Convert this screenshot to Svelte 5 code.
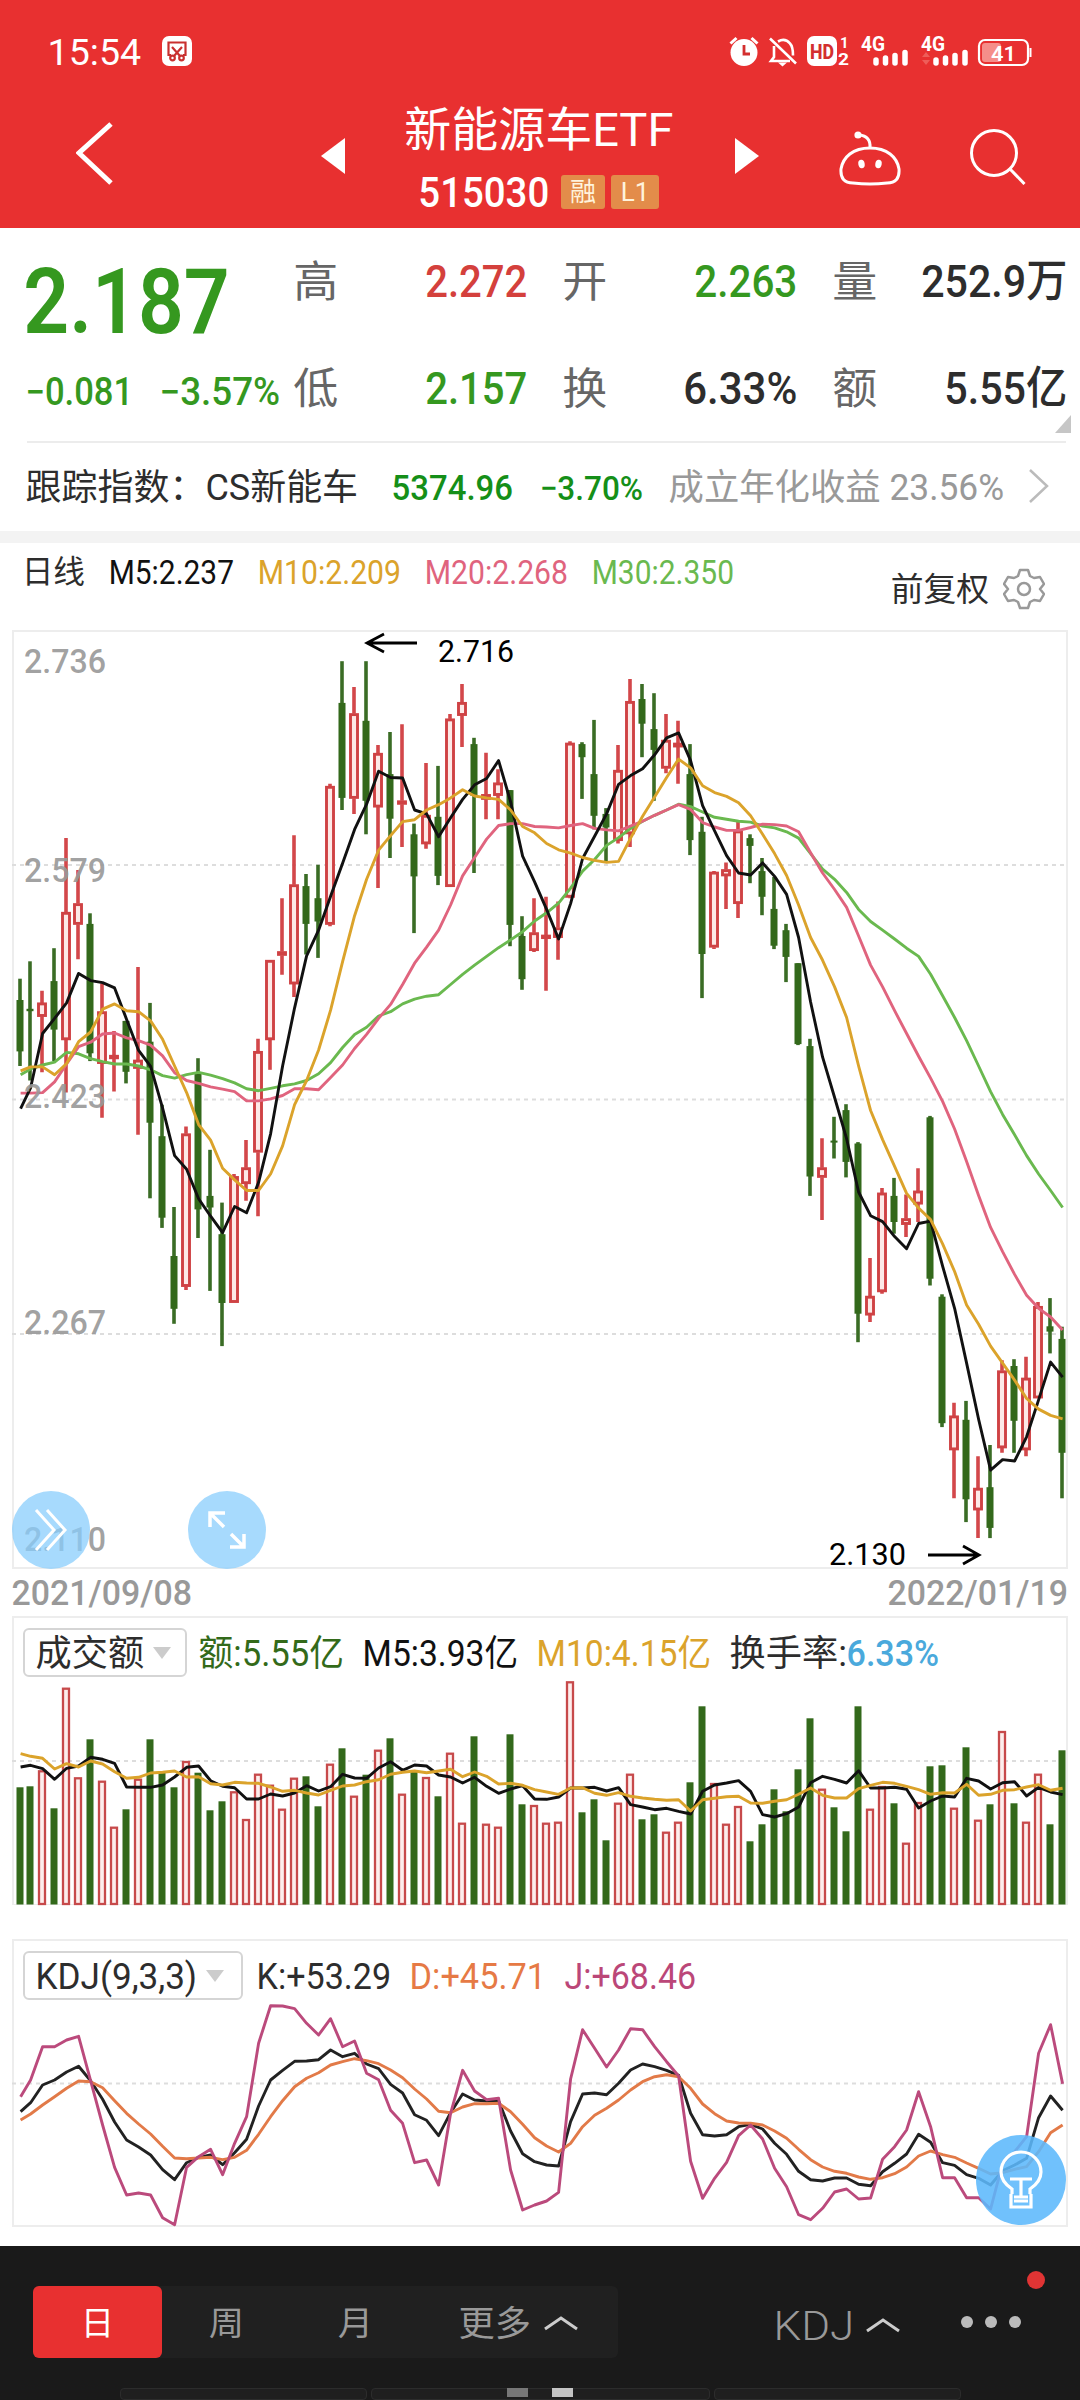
<script>
  // Columns are 12px apart, the first one sits slightly closer to the second.
  const columnX = (i) => (i === 0 ? 8 : i === 1 ? 18 : 30 + 12 * (i - 2));
  const priceY = (v) => (v / 2.063 - 10).toFixed(1);
  const volumeY = (v) => ((v - 20) / 3).toFixed(1);
  const kdjY = (v) => ((v - 30) / 3).toFixed(1);

  const points = (values, scale) =>
    values.map((v, i) => `${columnX(i) + 0.6},${scale(v)}`).join(' ');

  // One candle per entry: direction, high, body top, body bottom, low.
  const candles = `g740,784,890,920 g704,802,807,950 r765,790,818,933 g677,745,845,910 r450,603,866,975
    r516,585,628,700 g605,627,894,910 r750,808,915,1027 r848,898,904,973 g827,827,932,956
    r716,908,925,1062 g790,870,1037,1193 g1000,1065,1233,1254 g1211,1312,1421,1452 r1045,1060,1375,1382
    g904,935,1216,1275 g1093,1188,1212,1384 g1202,1267,1409,1498 r1143,1148,1408,1408 r1073,1130,1163,1198
    r864,890,1098,1230 r702,702,866,928 r574,684,692,732 r444,546,751,778 g524,549,627,690
    g505,574,622,697 r338,343,628,632 g85,171,367,392 r138,193,368,400 g85,208,373,442
    r258,275,386,553 g231,318,410,491 r215,373,380,468 g420,442,529,646 r295,403,462,472
    g301,406,528,547 r194,204,550,550 r132,170,197,262 g243,256,363,522 r274,360,370,411
    r308,336,362,411 g351,351,629,673 g611,652,741,763 r574,645,682,685 r571,650,657,765
    r581,635,655,701 r250,254,572,574 g252,256,283,369 g206,318,404,432 g388,400,428,500
    r258,310,455,461 r122,168,441,468 g132,163,214,283 g151,225,268,373 r194,248,306,316
    r208,254,262,338 g256,318,454,485 g406,437,689,780 r518,520,675,679 r500,515,528,596
    r416,435,585,615 g442,450,466,543 g491,518,571,609 g530,596,672,679 g627,640,695,747
    g708,708,875,877 g864,879,1148,1188 r1069,1130,1150,1238 g1025,1074,1077,1111 g999,1011,1118,1150
    g1077,1080,1431,1490 r1316,1395,1434,1448 r1172,1182,1386,1390 g1151,1188,1242,1266 r1185,1235,1247,1273
    r1131,1178,1205,1242 g1023,1026,1359,1373 g1391,1396,1657,1665 r1615,1642,1712,1812 g1611,1650,1814,1861
    r1725,1791,1836,1894 g1702,1789,1873,1894 r1527,1549,1708,1718 g1525,1539,1652,1718 r1520,1564,1712,1725
    r1407,1416,1605,1605 g1399,1457,1468,1513 g1458,1483,1718,1812`
    .trim()
    .split(/\s+/)
    .map((entry, i) => {
      const [high, top, bottom, low] = entry.slice(1).split(',').map((v) => +priceY(v));
      return { x: columnX(i), up: entry[0] === 'r', high, top, bottom, low };
    });

  const averages = [
    { name: 'm30', values: [938,926,918,912,892,895,905,911,916,916,920,928,940,945,938,933,939,946,955,967,971,966,961,957,950,936,913,882,855,840,817,808,792,782,776,773,752,731,712,694,676,660,643,621,604,584,553,518,494,465,449,430,415,403,392,380,385,396,407,411,415,417,425,429,437,450,482,514,535,562,597,622,640,658,677,694,731,775,820,868,920,973,1020,1062,1105,1143,1177,1212] },
    { name: 'm20', values: [976,976,975,953,916,880,871,854,852,862,868,877,899,934,950,956,963,968,973,992,992,988,981,967,967,969,944,918,884,855,822,793,752,708,675,640,588,528,490,452,424,420,420,426,427,429,424,420,430,433,435,425,415,403,392,381,391,418,427,434,434,428,421,422,425,437,480,522,556,593,652,712,757,806,853,900,945,993,1050,1117,1187,1253,1303,1350,1393,1420,1438,1465] },
    { name: 'm5', values: [1008,965,853,822,790,729,744,748,759,824,888,921,1007,1105,1133,1194,1230,1264,1210,1223,1160,1060,920,800,693,640,570,502,432,380,312,325,326,392,400,447,408,370,340,327,290,375,487,540,597,658,585,492,446,400,339,321,307,278,243,233,290,383,435,486,522,526,501,529,566,655,788,902,985,1070,1180,1229,1241,1272,1297,1245,1240,1333,1420,1533,1649,1754,1732,1735,1685,1609,1531,1562] },
    { name: 'm10', values: [930,922,922,938,915,870,850,803,792,806,808,827,865,920,975,1041,1073,1131,1155,1177,1177,1143,1085,1000,950,887,805,705,610,535,475,445,416,412,392,381,367,350,363,367,370,392,426,439,461,474,481,490,496,500,498,450,405,365,325,287,305,342,356,364,377,404,442,482,527,588,655,702,757,820,920,1012,1072,1127,1183,1213,1237,1287,1344,1413,1453,1498,1533,1568,1606,1628,1641,1648] }
  ];

  const volumes = [531,528,480,594,232,501,387,511,649,597,505,387,485,531,452,487,600,573,543,626,490,523,595,502,498,588,460,414,556,493,418,384,550,480,500,558,427,637,378,640,649,372,582,584,637,634,213,606,567,690,577,490,627,612,664,634,516,288,518,640,587,693,642,537,603,477,324,535,591,663,288,595,527,579,697,575,468,465,592,411,628,582,362,579,634,490,642,420];
  const volumeM5 = [470,465,475,507,474,467,441,447,459,530,531,531,524,500,471,467,511,528,532,566,566,551,557,548,526,542,529,492,503,504,473,454,480,464,467,494,500,518,501,528,549,536,526,566,567,560,533,533,531,542,532,583,590,598,594,603,611,543,524,518,511,543,613,620,610,590,517,498,507,518,481,533,533,531,537,593,572,557,560,504,512,536,517,514,557,531,545,553];
  const volumeM10 = [430,438,444,476,460,470,452,461,484,504,501,488,486,482,500,499,520,524,516,518,519,530,543,540,548,554,540,527,524,514,508,492,486,482,487,482,477,499,485,498,521,519,525,538,545,552,533,532,549,555,547,558,563,567,570,568,602,568,564,559,558,578,579,573,568,552,533,555,563,563,535,525,516,519,528,538,552,547,548,522,555,552,540,538,530,523,540,534];

  const kLine = [545,518,465,450,426,409,452,508,576,630,651,675,719,749,698,682,675,704,668,628,528,450,421,394,393,389,360,380,370,402,416,463,489,554,571,617,548,492,510,513,512,603,671,695,705,708,575,492,489,494,460,420,402,410,421,436,550,614,618,614,590,583,597,640,673,724,749,753,744,744,763,767,725,700,672,613,637,698,706,734,745,765,722,705,685,563,498,541];
  const dLine = [570,552,525,500,475,453,455,473,512,550,582,612,649,684,686,684,682,689,682,661,613,560,512,470,445,428,405,395,386,392,401,420,443,477,507,544,548,531,521,521,520,545,583,623,648,666,640,590,556,535,510,480,455,440,434,440,475,522,551,573,579,580,585,603,625,658,689,711,724,730,741,748,743,731,711,678,663,674,682,699,715,732,728,718,710,665,608,585];
  const jLine = [500,450,350,350,330,319,452,585,712,795,789,795,863,884,712,680,658,734,640,560,340,227,228,236,280,315,266,350,333,430,449,541,580,698,690,765,550,421,483,509,505,720,840,825,813,787,447,299,355,411,360,296,299,350,395,438,694,805,745,697,617,585,627,715,770,854,869,835,786,777,807,804,688,650,600,485,590,743,743,803,803,837,700,665,620,370,284,461];

  const quotes = [
    [['高', '2.272', 99, 'up'], ['低', '2.157', 99, 'down']],
    [['开', '2.263', 100, 'down'], ['换', '6.33%', 111, 'ink']],
    [['量', '252.9万', 143, 'ink'], ['额', '5.55亿', 120, 'ink']]
  ];
  const gridlines = [235, 469.5, 704];
  const priceLabels = [['2.736', 43], ['2.579', 252], ['2.423', 478], ['2.267', 704], ['2.110', 921]];
</script>

<!-- Text condensed to a given width; the box ends at the baseline. -->
{#snippet fit(text, width, size, cls)}
  <svg class="fit {cls}" {width} height={Math.round(size * 0.72)}>
    <text x={-size * 0.04} y={Math.round(size * 0.72)} font-size={size} textLength={width + size * 0.07} lengthAdjust="spacingAndGlyphs">{text}</text>
  </svg>
{/snippet}

<div class="app">
  <header>
    <div class="status">
      {@render fit('15:54', 91, 37, 'white')}
      <svg class="shot" width="30" height="30" viewBox="0 0 30 30">
        <rect width="30" height="30" rx="7" fill="#fff" />
        <g fill="none" stroke="#c9302f" stroke-width="2.2">
          <path d="M9 19H6.5V6.5h17V19H21M10 11l8 9M20 11l-8 9" />
          <circle cx="10.500" cy="22" r="2.300" /><circle cx="19.500" cy="22" r="2.300" />
        </g>
      </svg>
      <svg class="indicators" width="304" height="34" viewBox="728 34 304 34">
        <circle cx="744" cy="52.500" r="13.500" fill="#fff" />
        <path d="M730.500 43.500l6-5.500M757.500 43.500l-6-5.500" fill="none" stroke="#fff" stroke-width="3" />
        <path d="M744 45v9h6" fill="none" stroke="#d32f2f" stroke-width="2.800" />
        <g fill="none" stroke="#fff" stroke-width="2.600">
          <path d="M770 38.500l26 25M774 46v11l-3 4h19M778 41.500q7-4 12 2 3 3 3 12" />
        </g>
        <path d="M778 62.500h9l-4.500 4z" fill="#fff" />
        <rect x="807" y="36" width="30" height="30" rx="7" fill="#fff" />
        <text x="810" y="58.500" font-size="20" font-weight="800" fill="#d32f2f" textLength="24" lengthAdjust="spacingAndGlyphs">HD</text>
        <g fill="#fff" font-weight="700">
          <text x="840" y="48" font-size="15">1</text>
          <text x="838" y="65" font-size="16" textLength="11" lengthAdjust="spacingAndGlyphs">2</text>
          <text x="861" y="51" font-size="20" textLength="24" lengthAdjust="spacingAndGlyphs">4G</text>
          <text x="921" y="51" font-size="20" textLength="24" lengthAdjust="spacingAndGlyphs">4G</text>
        </g>
        <g stroke="#fff" stroke-width="5.500" stroke-linecap="round">
          <path d="M876 60v3M885.500 58v5M895 55.500v7.500M905 52.500v10.500M936 60v3M945.500 58v5M955 55.500v7.500M965 52.500v10.500" />
        </g>
        <path d="M922 57l4-5 4 5zM922 60l4 5 4-5z" fill="#ee5d59" />
        <rect x="982" y="43" width="19" height="19" rx="3" fill="#f58e8a" />
        <rect x="979" y="40" width="49" height="25" rx="6" fill="none" stroke="#fff" stroke-width="2.200" />
        <path d="M1030.500 48v9" stroke="#fff" stroke-width="2" />
        <text x="991" y="60.500" font-size="21" font-weight="600" fill="#fff" textLength="25" lengthAdjust="spacingAndGlyphs">41</text>
      </svg>
    </div>
    <div class="titlebar">
      <svg class="back" width="40" height="68" viewBox="0 0 40 68"><path d="M35 4L3 33l32 30" fill="none" stroke="#fff" stroke-width="5" /></svg>
      <svg class="prev" width="25" height="36" viewBox="0 0 25 36"><path d="M24 0v36L0 18z" fill="#fff" /></svg>
      <div class="title">
        <h1>{@render fit('新能源车ETF', 266, 47, 'white')}</h1>
        <div class="code">
          {@render fit('515030', 128, 42, 'white semi')}
          <span class="tag">融</span>
          <span class="tag l1">L1</span>
        </div>
      </div>
      <svg class="next" width="25" height="36" viewBox="0 0 25 36"><path d="M0 0v36l24-18z" fill="#fff" /></svg>
      <svg class="robot" width="62" height="58" viewBox="0 0 62 58" fill="none" stroke="#fff" stroke-width="3">
        <path d="M31 19C48 19 58 28 60 40Q61 54 48 54Q31 56 14 54Q1 54 2 40C4 28 14 19 31 19z" />
        <path d="M31 19Q32 7 20 6" />
        <circle cx="19" cy="6" r="3.600" fill="#fff" stroke="none" />
        <ellipse cx="22.500" cy="35" rx="3.200" ry="4.200" fill="#fff" stroke="none" transform="rotate(-10 22.500 35)" />
        <ellipse cx="39.500" cy="35" rx="3.200" ry="4.200" fill="#fff" stroke="none" transform="rotate(10 39.500 35)" />
      </svg>
      <svg class="search" width="56" height="58" viewBox="0 0 56 58" fill="none" stroke="#fff" stroke-width="3">
        <circle cx="24" cy="25" r="22.500" /><path d="M40 41l14.500 15" />
      </svg>
    </div>
  </header>

  <section class="quote">
    <div class="last">
      <div class="line big">{@render fit('2.187', 200, 91, 'down bold')}</div>
      <div class="line change">
        {@render fit('−0.081', 105, 38, 'down semi')}
        {@render fit('−3.57%', 118, 38, 'down semi')}
      </div>
    </div>
    {#each quotes as column}
      <div class="column">
        {#each column as [label, value, width, tone]}
          <div class="line cell">
            {@render fit(label, 42, 43, 'label')}
            {@render fit(value, width, 45, `${tone} semi`)}
          </div>
        {/each}
      </div>
    {/each}
    <i class="corner"></i>
  </section>

  <section class="index">
    {@render fit('跟踪指数：CS新能车', 330, 36, 'ink')}
    {@render fit('5374.96', 119, 35, 'index-green semi')}
    {@render fit('−3.70%', 101, 34, 'index-green semi')}
    {@render fit('成立年化收益 23.56%', 333, 36, 'muted')}
    <svg class="more" width="22" height="36" viewBox="0 0 22 36"><path d="M2 2l17 16L2 34" fill="none" stroke="#bbb" stroke-width="2.500" /></svg>
  </section>

  <section class="legend">
    {@render fit('日线', 61, 32, 'ink')}
    {@render fit('M5:2.237', 123, 33, 'm5')}
    {@render fit('M10:2.209', 141, 33, 'm10')}
    {@render fit('M20:2.268', 141, 33, 'm20')}
    {@render fit('M30:2.350', 140, 33, 'm30')}
    <div class="adjust">
      {@render fit('前复权', 96, 33, 'ink')}
      <svg width="42" height="42" viewBox="0 0 42 42" fill="none" stroke="#999" stroke-width="2.500" stroke-linejoin="round">
        <path d="M17 2h8l2 6 4 2 6-1 4 7-4 5 4 5-4 7-6-1-4 2-2 6h-8l-2-6-4-2-6 1-4-7 4-5-4-5 4-7 6 1 4-2z" />
        <circle cx="21" cy="21" r="6" />
      </svg>
    </div>
  </section>

  <section class="panel price">
    <svg width="1056" height="938">
      {#each gridlines as y}
        <line class="dash" x1="0" x2="1054" y1={y} y2={y} />
      {/each}
      {#each candles as c}
        {#if c.up}
          <path class="wick up" d="M{c.x} {c.high}V{c.top}M{c.x} {c.bottom}V{c.low}" />
          <rect class="hollow" x={c.x - 3.5} y={c.top + 1} width="7" height={Math.max(c.bottom - c.top - 2, 1.5)} />
        {:else}
          <path class="wick down" d="M{c.x} {c.high}V{c.low}" />
          <rect class="solid" x={c.x - 3.5} y={c.top} width="7" height={Math.max(c.bottom - c.top, 2)} />
        {/if}
      {/each}
      {#each averages as line}
        <polyline class="curve {line.name}" points={points(line.values, priceY)} />
      {/each}
      {#each priceLabels as [label, y]}
        <text class="axis" x="12" {y} textLength="82" lengthAdjust="spacingAndGlyphs">{label}</text>
      {/each}
      <g fill="none" stroke="#000" stroke-width="2.800">
        <path d="M405 13H356M372 4l-17 9 17 9M916 925h49M951 916l16 9-16 9" />
      </g>
      <text class="mark" x="426" y="32" textLength="76" lengthAdjust="spacingAndGlyphs">2.716</text>
      <text class="mark" x="817" y="935" textLength="77" lengthAdjust="spacingAndGlyphs">2.130</text>
    </svg>
    <div class="round skip">
      <svg width="36" height="44" viewBox="0 0 36 44" fill="none" stroke="#fff" stroke-width="3"><path d="M3 2l18 20L3 42M14 2l18 20-18 20" /></svg>
    </div>
    <div class="round expand">
      <svg width="40" height="40" viewBox="0 0 40 40" fill="none" stroke="#fff" stroke-width="3.500"><path d="M18 3H3v14M3 3l14 14M37 24v13H23M37 37L24 24" /></svg>
    </div>
  </section>

  <div class="dates">
    {@render fit('2021/09/08', 178, 35, 'muted semi')}
    {@render fit('2022/01/19', 178, 35, 'muted semi')}
  </div>

  <section class="panel volume">
    <div class="head">
      <div class="select vol">{@render fit('成交额', 106, 36, 'ink')}<i></i></div>
      {@render fit('额:5.55亿', 143, 36, 'green')}
      {@render fit('M5:3.93亿', 153, 36, 'm5')}
      {@render fit('M10:4.15亿', 172, 36, 'm10')}
      {@render fit('换手率:', 115, 36, 'ink')}
      {@render fit('6.33%', 90, 36, 'blue semi')}
    </div>
    <svg class="plot" width="1056" height="289">
      <line class="dash" x1="0" x2="1054" y1="144" y2="144" />
      {#each volumes as v, i}
        {#if candles[i].up}
          <rect class="vbar" x={columnX(i) - 3} y={+volumeY(v) + 1} width="6" height={286 - volumeY(v)} />
        {:else}
          <rect class="solid" x={columnX(i) - 3.5} y={volumeY(v)} width="7" height={287.5 - volumeY(v)} />
        {/if}
      {/each}
      <polyline class="curve m5" points={points(volumeM5, volumeY)} />
      <polyline class="curve m10" points={points(volumeM10, volumeY)} />
    </svg>
  </section>

  <section class="panel kdj">
    <div class="head">
      <div class="select osc">{@render fit('KDJ(9,3,3)', 159, 36, 'ink')}<i></i></div>
      {@render fit('K:+53.29', 132, 36, 'ink')}
      {@render fit('D:+45.71', 134, 36, 'orange')}
      {@render fit('J:+68.46', 129, 36, 'pink')}
    </div>
    <svg class="plot" width="1056" height="287">
      <line class="dash" x1="0" x2="1054" y1="143.500" y2="143.500" />
      <polyline class="curve k" points={points(kLine, kdjY)} />
      <polyline class="curve d" points={points(dLine, kdjY)} />
      <polyline class="curve j" points={points(jLine, kdjY)} />
    </svg>
    <div class="bulb">
      <svg width="46" height="60" viewBox="0 0 46 60" fill="none" stroke="#fff" stroke-width="3.200">
        <path d="M14 44V39C8 35 3 30 3 22a20 20 0 0 1 40 0c0 8-5 13-11 17v5M13 44v13h20V44M16 51h14M12 29h22M23 29v19M16 47h14" />
      </svg>
    </div>
  </section>

  <nav>
    <div class="periods">
      <div class="tab active">{@render fit('日', 31, 33, 'white')}</div>
      <div class="tab">{@render fit('周', 33, 33, 'dim')}</div>
      <div class="tab">{@render fit('月', 33, 33, 'dim')}</div>
      <div class="tab wide">
        {@render fit('更多', 70, 35, 'dim')}
        <svg class="caret" width="34" height="15" viewBox="0 0 34 15"><path d="M1 13L17 2l16 11" fill="none" stroke="#ccc" stroke-width="3" /></svg>
      </div>
    </div>
    <div class="indicator">
      {@render fit('KDJ', 78, 41, 'dim light')}
      <svg class="caret" width="34" height="15" viewBox="0 0 34 15"><path d="M1 13L17 2l16 11" fill="none" stroke="#ccc" stroke-width="3" /></svg>
    </div>
    <div class="dots"><i></i><i></i><i></i><b></b></div>
    <div class="under"><span></span><span></span><span></span><i></i><i></i></div>
  </nav>
</div>

<style>
  :global(body) { background: #fff; }
  .app {
    width: 1080px;
    height: 2400px;
    overflow: hidden;
    display: flex;
    flex-direction: column;
    background: #fff;
    font-family: Roboto, "Noto Sans CJK SC", sans-serif;
  }
  svg { display: block; flex: none; }
  .fit { overflow: visible; fill: currentColor; }
  .semi { font-weight: 500; }
  .bold { font-weight: 600; }
  .light { font-weight: 350; }
  .white { color: #fff; }
  .ink { color: #2d2d2d; }
  .label { color: #666; }
  .muted { color: #999; }
  .dim { color: #999; }
  .up { color: #d4403c; }
  .down { color: #35981f; }
  .index-green { color: #158f18; }
  .green { color: #336a1a; }
  .blue { color: #4aa9dc; }
  .orange { color: #e67a45; }
  .pink { color: #bb4778; }
  .m5 { color: #111; }
  .m10 { color: #dba32b; }
  .m20 { color: #e0647e; }
  .m30 { color: #6ab94f; }

  header { height: 228px; background: #e83030; box-sizing: border-box; padding-top: 34px; }
  .status { height: 34px; display: flex; align-items: center; padding: 0 48px 0 49px; }
  .shot { margin-left: 22px; }
  .indicators { margin-left: auto; overflow: visible; }
  .titlebar { height: 160px; display: flex; align-items: flex-start; padding-left: 76px; }
  .back { margin-top: 52px; }
  .prev { margin: 70px 0 0 205px; }
  .title { width: 268px; margin-left: 60px; }
  h1 { margin: 0; padding-top: 44px; font-weight: 400; }
  .code { display: flex; align-items: center; margin: 29px 0 0 14px; height: 34px; }
  .tag {
    flex: none; width: 44px; height: 34px; margin-left: 13px; border-radius: 3px;
    background: #e38c4a; color: #fff3dc; font-size: 26px; line-height: 34px; text-align: center;
  }
  .tag.l1 { width: 48px; margin-left: 6px; }
  .next { margin: 70px 0 0 61px; }
  .robot { margin: 61px 0 0 79px; }
  .search { margin: 60px 0 0 69px; }

  .quote {
    position: relative; width: 1039px; height: 213px; margin: 0 14px 0 27px; display: flex;
    border-bottom: 2px solid #ececec;
  }
  .last { width: 252px; margin-right: 16px; }
  .line { display: flex; align-items: flex-end; }
  .big { height: 105px; }
  .change { height: 72px; justify-content: space-between; }
  .column { width: 232px; margin-right: 38px; }
  .column:nth-child(4) { margin-right: 0; }
  .cell { height: 107px; justify-content: space-between; }
  .cell:first-child { height: 69px; }
  .corner {
    position: absolute; right: -5px; bottom: 8px;
    border-left: 16px solid transparent; border-bottom: 18px solid #c6c6c6;
  }

  .index {
    height: 100px; box-sizing: border-box; padding: 0 0 31px 27px;
    display: flex; align-items: flex-end; border-bottom: 12px solid #f3f3f3;
  }
  .index .index-green { margin-left: 36px; }
  .index .index-green + .index-green { margin-left: 29px; }
  .index .muted { margin-left: 28px; }
  .more { margin: 0 0 -4px 25px; }

  .legend { height: 87px; display: flex; align-items: flex-start; box-sizing: border-box; padding: 17px 0 0 23px; }
  .legend > .m5, .legend > .m10, .legend > .m20, .legend > .m30 { margin-left: 26px; }
  .adjust { margin: 8px 35px 0 auto; display: flex; align-items: center; gap: 15px; }

  .panel { position: relative; box-sizing: border-box; margin: 0 12px; border: 2px solid #ededed; width: 1056px; }
  .price { height: 939px; }
  .price svg { overflow: visible; }
  .price > svg { margin: -2px 0 0 -2px; }
  .dash { stroke: #ddd; stroke-width: 2; stroke-dasharray: 4 4; }
  .wick { fill: none; stroke: #d3474a; stroke-width: 3.6; }
  .wick.down { stroke: #3a6c25; }
  .hollow { fill: #fde9e7; stroke: #cf4244; stroke-width: 2.9; }
  .solid { fill: #33691b; }
  .vbar { fill: #fdeeed; stroke: #c74a4b; stroke-width: 2.3; }
  .curve { fill: none; stroke: currentColor; stroke-width: 2.9; stroke-linejoin: round; }
  .curve.j { color: #bb4a7c; }
  .curve.d { color: #e27a48; }
  .curve.k { color: #222; }
  .axis { fill: #999; fill-opacity: .92; font-size: 34px; font-weight: 500; }
  .mark { fill: #000; font-size: 32px; }
  .round {
    position: absolute; bottom: -2px; width: 78px; height: 78px; border-radius: 50%;
    background: rgba(136, 205, 252, .74); display: flex; align-items: center; justify-content: center;
  }
  .skip { left: -2px; }
  .expand { left: 174px; }

  .dates { height: 47px; padding: 11px 13px 0; box-sizing: border-box; display: flex; justify-content: space-between; }

  .volume { height: 289px; border-bottom-width: 1px; margin-bottom: 34px; }
  .kdj { height: 288px; }
  .head { height: 49px; padding: 10px 0 0 9px; display: flex; align-items: center; }
  .select { box-sizing: border-box; height: 49px; border: 2px solid #d5d5d5; border-radius: 6px; display: flex; align-items: center; padding-left: 12px; }
  .select i { border: 9.5px solid transparent; border-top: 12px solid #ccc; border-bottom: 0; margin-left: 10px; }
  .vol { width: 164px; margin-right: 13px; }
  .osc { width: 220px; margin-right: 15px; }
  .volume .head > .m5, .volume .head > .m10, .volume .head > .ink { margin-left: 21px; }
  .head > .blue { margin-left: 2px; }
  .head > .orange, .head > .pink { margin-left: 21px; }
  .plot { margin: -60px 0 0 -2px; overflow: visible; }
  .bulb {
    position: absolute; right: 0; bottom: 0; width: 90px; height: 90px; border-radius: 50%;
    background: rgba(92, 184, 252, .88); display: flex; align-items: center; justify-content: center;
  }

  nav { position: relative; margin-top: auto; height: 154px; flex: none; background: #1a1a1a; display: flex; align-items: flex-start; }
  .periods { margin: 40px 0 0 33px; width: 585px; height: 72px; background: #202020; border-radius: 6px; display: flex; }
  .tab { width: 129px; padding-top: 2px; box-sizing: border-box; display: flex; align-items: center; justify-content: center; }
  .tab.active { background: #e83030; border-radius: 6px; }
  .tab.wide { width: 198px; gap: 14px; }
  .indicator { margin: 64px 0 0 157px; display: flex; align-items: center; gap: 13px; }
  .dots { position: relative; display: flex; gap: 12px; margin: 70px 0 0 61px; }
  .dots i { width: 12px; height: 12px; border-radius: 50%; background: #bbb; }
  .dots b { position: absolute; width: 18px; height: 18px; border-radius: 50%; background: #e03434; right: -24px; top: -45px; }
  .under { position: absolute; left: 120px; bottom: 0; width: 841px; height: 12px; display: flex; gap: 4px; overflow: hidden; }
  .under span { flex: 247; height: 10px; background: #1f1f1f; border: 1px solid #2c2c2c; border-radius: 4px; }
  .under span:nth-child(2) { flex: 340; }
  .under i { position: absolute; left: 387px; width: 21px; height: 9px; background: #777; }
  .under i:last-child { left: 432px; background: #c4c4c4; }
</style>
